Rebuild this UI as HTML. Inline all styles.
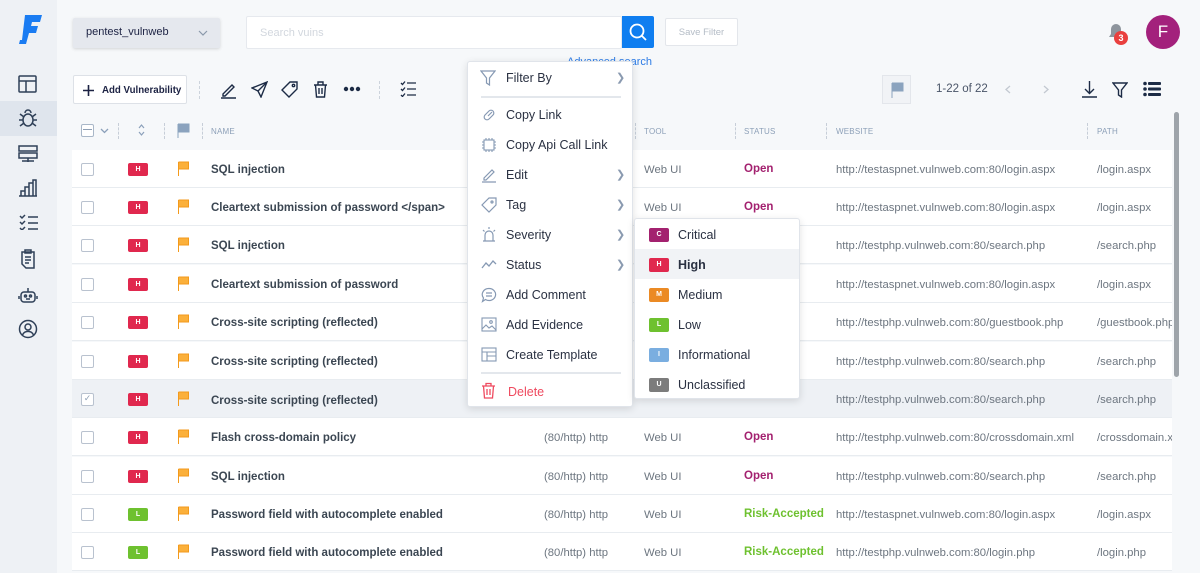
<!DOCTYPE html>
<html><head><meta charset="utf-8"><style>
*{box-sizing:border-box;margin:0;padding:0}
body{width:1200px;height:573px;overflow:hidden;background:#f6f8fa;font-family:"Liberation Sans",sans-serif;position:relative;color:#1c2243}
.a{position:absolute}
.side{left:0;top:0;width:57px;height:573px;background:#eef1f5}
.sel{left:0;top:101px;width:57px;height:35px;background:#dfe5ed}
.row{left:72px;width:1100px;height:38px;background:#fff;border-bottom:1px solid #e8ecf0}
.cb{width:13px;height:13px;border:1.5px solid #b9c2cf;border-radius:2px;background:#fff}
.bd{width:20px;height:13px;border-radius:2px;color:#fff;font-size:7px;font-weight:bold;text-align:center;line-height:13px}
.t{font-size:11.5px;white-space:nowrap}
.nm{font-weight:bold;color:#3b4652;font-size:11.5px;white-space:nowrap;margin-top:2px}
.g{color:#6d7680;font-size:11.3px;white-space:nowrap;margin-top:2px}
.hd{font-size:8px;color:#8da0b8;letter-spacing:.2px}
.menu{background:#fff;border:1px solid #e0e4ea;border-radius:3px;box-shadow:0 2px 8px rgba(0,0,0,.12)}
.mi{position:absolute;left:38px;font-size:12.5px;color:#2a3142}
.arr{position:absolute;left:148px;color:#8a9ab0;font-size:11px}
.sb{position:absolute;left:14px;width:20px;height:14px;border-radius:2px;color:#fff;font-size:7px;font-weight:bold;text-align:center;line-height:14px}
.sl{position:absolute;left:43px;font-size:12.5px;color:#2a3142}
</style></head><body>
<div class="a side"></div>
<div class="a sel"></div>
<svg class="a" style="left:18px;top:14px" width="24" height="32" viewBox="0 0 24 32"><path d="M7 1H24L22 8H14L13 12H20L18 19H11L8 30H1L2 26H4Z" fill="#1a7cf2"/></svg>
<svg class="a" style="left:18px;top:75px" width="20" height="18" fill="none" stroke="#2f4058" stroke-width="1.5"><rect x="1" y="1" width="17" height="16" rx="1"/><path d="M1 6H18M8 6V17"/></svg>
<svg class="a" style="left:18px;top:108px" width="20" height="20" fill="none" stroke="#2f4058" stroke-width="1.5"><ellipse cx="10" cy="12" rx="5" ry="6"/><path d="M7 5a3 3 0 0 1 6 0M1 12h4M15 12h4M2 6l4 3M18 6l-4 3M2 18l4-3M18 18l-4-3"/></svg>
<svg class="a" style="left:18px;top:145px" width="20" height="18" fill="none" stroke="#2f4058" stroke-width="1.5"><rect x="1" y="1" width="18" height="5"/><rect x="1" y="8" width="18" height="5"/><path d="M4 16h12M10 13v4"/></svg>
<svg class="a" style="left:18px;top:179px" width="20" height="18" fill="none" stroke="#2f4058" stroke-width="1.5"><path d="M1 17h18M3 17v-5h4v5M7 17V8h4v9M11 17V4h4v13M15 17V1h3v16"/></svg>
<svg class="a" style="left:19px;top:214px" width="20" height="16" fill="none" stroke="#2f4058" stroke-width="1.5"><path d="M1 2l2 2 3-3M1 8l2 2 3-3M1 14l2 2 3-3M9 3h10M9 9h10M9 15h10"/></svg>
<svg class="a" style="left:21px;top:249px" width="14" height="20" fill="none" stroke="#2f4058" stroke-width="1.5"><path d="M1 3h12v16H5l-4-4z M4 1h6v3H4z M4 8h6M4 11h6M4 14h4"/></svg>
<svg class="a" style="left:18px;top:286px" width="20" height="18" fill="none" stroke="#2f4058" stroke-width="1.5"><rect x="3" y="6" width="14" height="10" rx="3"/><path d="M10 6V2M1 10v3M19 10v3"/><circle cx="7.5" cy="10" r="1"/><circle cx="12.5" cy="10" r="1"/><path d="M8 13h4"/></svg>
<svg class="a" style="left:18px;top:319px" width="20" height="20" fill="none" stroke="#2f4058" stroke-width="1.5"><circle cx="10" cy="10" r="8.5"/><circle cx="10" cy="8" r="3"/><path d="M4.5 16a6 6 0 0 1 11 0"/></svg>

<div class="a" style="left:73px;top:18px;width:147px;height:30px;background:#e5e8ee;border-radius:2px;box-shadow:0 1px 3px rgba(0,0,0,.15)"><span class="a t" style="left:13px;top:8px;font-size:11px;color:#1c2243">pentest_vulnweb</span><svg class="a" style="left:125px;top:12px" width="10" height="6" fill="none" stroke="#8a98aa" stroke-width="1.2"><path d="M1 1l4 4 4-4"/></svg></div>
<div class="a" style="left:246px;top:16px;width:376px;height:33px;background:#fff;border:1px solid #e6e9ee;border-radius:2px"><span class="a" style="left:13px;top:10px;font-size:11px;color:#d2d7de">Search vuins</span></div>
<div class="a" style="left:622px;top:16px;width:32px;height:32px;background:#0f7ef0;border-radius:0 2px 2px 0"><svg width="32" height="32" fill="none" stroke="#fff" stroke-width="1.8"><circle cx="15" cy="15" r="6.5"/><path d="M20 20l4 4"/></svg></div>
<div class="a" style="left:665px;top:18px;width:73px;height:28px;background:#fff;border:1px solid #e3e6eb;border-radius:2px;font-size:9.5px;color:#b4bcc6;text-align:center;line-height:27px">Save Filter</div>
<div class="a" style="left:567px;top:56px;font-size:11px;color:#2c7be5">Advanced search</div>
<svg class="a" style="left:1108px;top:23px" width="16" height="18"><path d="M8 1a5 5 0 0 1 5 5v5l2 3H1l2-3V6a5 5 0 0 1 5-5z" fill="#8e959d"/></svg>
<div class="a" style="left:1114px;top:31px;width:14px;height:14px;border-radius:50%;background:#e9403e;color:#fff;font-size:9px;font-weight:bold;text-align:center;line-height:14px">3</div>
<div class="a" style="left:1146px;top:15px;width:34px;height:34px;border-radius:50%;background:#a3217c;color:#fff;font-size:17px;text-align:center;line-height:34px">F</div>

<div class="a" style="left:73px;top:75px;width:114px;height:29px;background:#fff;border:1px solid #dde1e7;border-radius:2px"><svg class="a" style="left:9px;top:9px" width="11" height="11" stroke="#1c2243" stroke-width="1.6"><path d="M5.5 0v11M0 5.5h11"/></svg><span class="a" style="left:28px;top:9px;font-size:9.7px;font-weight:bold;color:#1c2243;white-space:nowrap">Add Vulnerability</span></div>
<div class="a" style="left:199px;top:81px;height:18px;border-left:1px dashed #ccd3dc"></div>
<svg class="a" style="left:220px;top:81px" width="18" height="18" fill="none" stroke="#1c2b45" stroke-width="1.4"><path d="M3 13l9-9 2 2-9 9H3z M1 17h15"/></svg>
<svg class="a" style="left:251px;top:81px" width="17" height="17" fill="none" stroke="#1c2b45" stroke-width="1.4"><path d="M16 1L1 7l6 3 3 6z M16 1L7 10"/></svg>
<svg class="a" style="left:281px;top:81px" width="18" height="17" fill="none" stroke="#1c2b45" stroke-width="1.4"><path d="M9 1h7v7l-8 8-7-7z"/><circle cx="12.5" cy="4.5" r="1.2"/></svg>
<svg class="a" style="left:313px;top:81px" width="15" height="17" fill="none" stroke="#1c2b45" stroke-width="1.4"><path d="M1 4h13M5 4V1h5v3M2.5 4l1 12h8l1-12M6 7v6M9 7v6"/></svg>
<svg class="a" style="left:343px;top:86px" width="18" height="6" fill="#1c2b45"><circle cx="3" cy="3" r="2.2"/><circle cx="9" cy="3" r="2.2"/><circle cx="15" cy="3" r="2.2"/></svg>
<div class="a" style="left:379px;top:81px;height:18px;border-left:1px dashed #ccd3dc"></div>
<svg class="a" style="left:400px;top:81px" width="17" height="16" fill="none" stroke="#1c2b45" stroke-width="1.3"><path d="M1 2l1.5 1.5 2.5-3M1 8l1.5 1.5 2.5-3M1 14l1.5 1.5 2.5-3M7 2h9M7 8h9M7 14h9"/></svg>
<div class="a" style="left:882px;top:75px;width:29px;height:29px;background:#f1f3f6;border:1px solid #e3e6eb"><svg width="29" height="29"><path d="M9 7v15M9 7h11v8H9" fill="#8ba3be" stroke="#8ba3be"/></svg></div>
<div class="a" style="left:936px;top:83px;font-size:11.5px;color:#4a5568">1-22 of 22</div>
<svg class="a" style="left:1005px;top:85px" width="6" height="9" fill="none" stroke="#c3c9d1" stroke-width="1.3"><path d="M5 1L1 4.5 5 8"/></svg>
<svg class="a" style="left:1043px;top:85px" width="6" height="9" fill="none" stroke="#c3c9d1" stroke-width="1.3"><path d="M1 1l4 3.5L1 8"/></svg>
<svg class="a" style="left:1081px;top:80px" width="17" height="18" fill="none" stroke="#1c2b45" stroke-width="1.4"><path d="M8.5 1v12M4 9l4.5 4.5L13 9M1 17h15"/></svg>
<svg class="a" style="left:1112px;top:82px" width="16" height="16" fill="none" stroke="#1c2b45" stroke-width="1.4"><path d="M1 1h14l-5.5 7v7l-3-2V8z"/></svg>
<svg class="a" style="left:1143px;top:81px" width="18" height="16" fill="#1c2b45"><circle cx="2" cy="2.5" r="1.8"/><circle cx="2" cy="8" r="1.8"/><circle cx="2" cy="13.5" r="1.8"/><rect x="5" y="1" width="13" height="3" rx="1"/><rect x="5" y="6.5" width="13" height="3" rx="1"/><rect x="5" y="12" width="13" height="3" rx="1"/></svg>

<div class="a cb" style="left:81px;top:124px;border-color:#a9b7c8"><div style="margin:4px 1px;border-top:1.5px solid #8fa0b5"></div></div>
<svg class="a" style="left:100px;top:128px" width="9" height="6" fill="none" stroke="#8ba0ba" stroke-width="1.3"><path d="M1 1l3.5 3.5L8 1"/></svg>
<div class="a" style="left:118px;top:123px;height:16px;border-left:1px dashed #c7ced8"></div>
<svg class="a" style="left:138px;top:124px" width="7" height="12" fill="none" stroke="#8ba0ba" stroke-width="1.2"><path d="M1 4l2.5-3L6 4M1 8l2.5 3L6 8"/></svg>
<div class="a" style="left:164px;top:123px;height:16px;border-left:1px dashed #c7ced8"></div>
<svg class="a" style="left:176px;top:123px" width="14" height="15"><path d="M2 1v14M2 1h11v8H2" fill="#8ba3be" stroke="#8ba3be"/></svg>
<div class="a" style="left:202px;top:123px;height:16px;border-left:1px dashed #c7ced8"></div>
<div class="a hd" style="left:211px;top:127px">NAME</div>
<div class="a" style="left:635px;top:123px;height:16px;border-left:1px dashed #c7ced8"></div>
<div class="a hd" style="left:644px;top:127px">TOOL</div>
<div class="a" style="left:735px;top:123px;height:16px;border-left:1px dashed #c7ced8"></div>
<div class="a hd" style="left:744px;top:127px">STATUS</div>
<div class="a" style="left:826px;top:123px;height:16px;border-left:1px dashed #c7ced8"></div>
<div class="a hd" style="left:836px;top:127px">WEBSITE</div>
<div class="a" style="left:1087px;top:123px;height:16px;border-left:1px dashed #c7ced8"></div>
<div class="a hd" style="left:1097px;top:127px">PATH</div>

<div class="a row" style="top:150px"></div><div class="a row" style="top:188px"></div><div class="a row" style="top:226px"></div><div class="a row" style="top:265px"></div><div class="a row" style="top:303px"></div><div class="a row" style="top:342px"></div><div class="a row" style="top:380px;background:#eef1f5"></div><div class="a row" style="top:418px"></div><div class="a row" style="top:457px"></div><div class="a row" style="top:495px"></div><div class="a row" style="top:533px"></div>

<div class="a cb" style="left:81px;top:163px"></div><div class="a bd" style="left:128px;top:163px;background:#e0284e">H</div>
<div class="a cb" style="left:81px;top:201px"></div><div class="a bd" style="left:128px;top:201px;background:#e0284e">H</div>
<div class="a cb" style="left:81px;top:239px"></div><div class="a bd" style="left:128px;top:239px;background:#e0284e">H</div>
<div class="a cb" style="left:81px;top:278px"></div><div class="a bd" style="left:128px;top:278px;background:#e0284e">H</div>
<div class="a cb" style="left:81px;top:316px"></div><div class="a bd" style="left:128px;top:316px;background:#e0284e">H</div>
<div class="a cb" style="left:81px;top:355px"></div><div class="a bd" style="left:128px;top:355px;background:#e0284e">H</div>
<div class="a cb" style="left:81px;top:393px;font-size:9px;color:#8fa0b5;line-height:9px;text-align:center">&#10003;</div><div class="a bd" style="left:128px;top:393px;background:#e0284e">H</div>
<div class="a cb" style="left:81px;top:431px"></div><div class="a bd" style="left:128px;top:431px;background:#e0284e">H</div>
<div class="a cb" style="left:81px;top:470px"></div><div class="a bd" style="left:128px;top:470px;background:#e0284e">H</div>
<div class="a cb" style="left:81px;top:508px"></div><div class="a bd" style="left:128px;top:508px;background:#6ec12f">L</div>
<div class="a cb" style="left:81px;top:546px"></div><div class="a bd" style="left:128px;top:546px;background:#6ec12f">L</div>

<svg class="a" style="left:177px;top:0" width="14" height="573" fill="#fbb03b" stroke="#f39a1c" stroke-width="1"><g id="f"><path d="M1.5 162v14M1.5 162h10v7h-10"/></g><use href="#f" y="38"/><use href="#f" y="76"/><use href="#f" y="115"/><use href="#f" y="153"/><use href="#f" y="192"/><use href="#f" y="230"/><use href="#f" y="268"/><use href="#f" y="307"/><use href="#f" y="345"/><use href="#f" y="383"/></svg>

<div class="a nm" style="left:211px;top:162px">SQL injection</div>
<div class="a nm" style="left:211px;top:200px">Cleartext submission of password &lt;/span&gt;</div>
<div class="a nm" style="left:211px;top:238px">SQL injection</div>
<div class="a nm" style="left:211px;top:277px">Cleartext submission of password</div>
<div class="a nm" style="left:211px;top:315px">Cross-site scripting (reflected)</div>
<div class="a nm" style="left:211px;top:354px">Cross-site scripting (reflected)</div>
<div class="a nm" style="left:211px;top:393px">Cross-site scripting (reflected)</div>
<div class="a nm" style="left:211px;top:430px">Flash cross-domain policy</div>
<div class="a nm" style="left:211px;top:469px">SQL injection</div>
<div class="a nm" style="left:211px;top:507px">Password field with autocomplete enabled</div>
<div class="a nm" style="left:211px;top:545px">Password field with autocomplete enabled</div>

<div class="a g" style="left:544px;top:430px">(80/http) http</div>
<div class="a g" style="left:544px;top:469px">(80/http) http</div>
<div class="a g" style="left:544px;top:507px">(80/http) http</div>
<div class="a g" style="left:544px;top:545px">(80/http) http</div>

<div class="a g" style="left:644px;top:162px">Web UI</div><div class="a t" style="left:744px;top:163px;color:#a3216f;font-weight:bold">Open</div>
<div class="a g" style="left:644px;top:200px">Web UI</div><div class="a t" style="left:744px;top:201px;color:#a3216f;font-weight:bold">Open</div>
<div class="a g" style="left:644px;top:430px">Web UI</div><div class="a t" style="left:744px;top:431px;color:#a3216f;font-weight:bold">Open</div>
<div class="a g" style="left:644px;top:469px">Web UI</div><div class="a t" style="left:744px;top:470px;color:#a3216f;font-weight:bold">Open</div>
<div class="a g" style="left:644px;top:507px">Web UI</div><div class="a t" style="left:744px;top:508px;color:#6ec12f;font-weight:bold">Risk-Accepted</div>
<div class="a g" style="left:644px;top:545px">Web UI</div><div class="a t" style="left:744px;top:546px;color:#6ec12f;font-weight:bold">Risk-Accepted</div>

<div class="a g" style="left:836px;top:162px">http://testaspnet.vulnweb.com:80/login.aspx</div><div class="a g" style="left:1097px;top:162px">/login.aspx</div>
<div class="a g" style="left:836px;top:200px">http://testaspnet.vulnweb.com:80/login.aspx</div><div class="a g" style="left:1097px;top:200px">/login.aspx</div>
<div class="a g" style="left:836px;top:238px">http://testphp.vulnweb.com:80/search.php</div><div class="a g" style="left:1097px;top:238px">/search.php</div>
<div class="a g" style="left:836px;top:277px">http://testaspnet.vulnweb.com:80/login.aspx</div><div class="a g" style="left:1097px;top:277px">/login.aspx</div>
<div class="a g" style="left:836px;top:315px">http://testphp.vulnweb.com:80/guestbook.php</div><div class="a g" style="left:1097px;top:315px">/guestbook.php</div>
<div class="a g" style="left:836px;top:354px">http://testphp.vulnweb.com:80/search.php</div><div class="a g" style="left:1097px;top:354px">/search.php</div>
<div class="a g" style="left:836px;top:392px">http://testphp.vulnweb.com:80/search.php</div><div class="a g" style="left:1097px;top:392px">/search.php</div>
<div class="a g" style="left:836px;top:430px">http://testphp.vulnweb.com:80/crossdomain.xml</div><div class="a g" style="left:1097px;top:430px">/crossdomain.xml</div>
<div class="a g" style="left:836px;top:469px">http://testphp.vulnweb.com:80/search.php</div><div class="a g" style="left:1097px;top:469px">/search.php</div>
<div class="a g" style="left:836px;top:507px">http://testaspnet.vulnweb.com:80/login.aspx</div><div class="a g" style="left:1097px;top:507px">/login.aspx</div>
<div class="a g" style="left:836px;top:545px">http://testphp.vulnweb.com:80/login.php</div><div class="a g" style="left:1097px;top:545px">/login.php</div>

<div class="a" style="left:1172px;top:150px;width:28px;height:423px;background:#f6f8fa"></div>
<div class="a" style="left:1174px;top:112px;width:5px;height:265px;background:#9ea4aa;border-radius:3px"></div>

<div class="a menu" style="left:467px;top:61px;width:166px;height:346px">
<svg class="a" style="left:12px;top:8px" width="16" height="16" fill="none" stroke="#8699b3" stroke-width="1.2"><path d="M1 1h14l-5.5 7v7l-3-2V8z"/></svg>
<div class="mi" style="top:9px">Filter By</div><div class="arr" style="top:9px">&#10095;</div>
<div class="a" style="left:13px;top:34px;width:140px;border-top:2px solid #e3e7ec"></div>
<svg class="a" style="left:13px;top:45px" width="16" height="16" fill="none" stroke="#8699b3" stroke-width="1.2"><path d="M7 9l4-4M6 6l2-2a2.8 2.8 0 0 1 4 4l-2 2M10 10l-2 2a2.8 2.8 0 0 1-4-4l2-2"/></svg>
<div class="mi" style="top:46px">Copy Link</div>
<svg class="a" style="left:13px;top:75px" width="16" height="16" fill="none" stroke="#8699b3" stroke-width="1.1"><rect x="3" y="3" width="10" height="10"/><path d="M5 1v2M8 1v2M11 1v2M5 13v2M8 13v2M11 13v2M1 5h2M1 8h2M1 11h2M13 5h2M13 8h2M13 11h2"/></svg>
<div class="mi" style="top:76px">Copy Api Call Link</div>
<svg class="a" style="left:13px;top:105px" width="16" height="16" fill="none" stroke="#8699b3" stroke-width="1.2"><path d="M3 11l8-8 2 2-8 8H3z M1 15h14"/></svg>
<div class="mi" style="top:106px">Edit</div><div class="arr" style="top:106px">&#10095;</div>
<svg class="a" style="left:13px;top:135px" width="16" height="16" fill="none" stroke="#8699b3" stroke-width="1.2"><path d="M8 1h7v7l-7 7-7-7z"/><circle cx="11" cy="5" r="1"/></svg>
<div class="mi" style="top:136px">Tag</div><div class="arr" style="top:136px">&#10095;</div>
<svg class="a" style="left:13px;top:164px" width="16" height="17" fill="none" stroke="#8699b3" stroke-width="1.2"><path d="M4 15V9a4 4 0 0 1 8 0v6M2 15h12M8 1v2M2 4l1.5 1.5M14 4l-1.5 1.5"/></svg>
<div class="mi" style="top:166px">Severity</div><div class="arr" style="top:166px">&#10095;</div>
<svg class="a" style="left:13px;top:196px" width="16" height="12" fill="none" stroke="#8699b3" stroke-width="1.3"><path d="M1 10l4-5 3 3 4-5 3 3"/></svg>
<div class="mi" style="top:196px">Status</div><div class="arr" style="top:196px">&#10095;</div>
<svg class="a" style="left:13px;top:225px" width="16" height="16" fill="none" stroke="#8699b3" stroke-width="1.2"><path d="M8 1.5a6.5 6 0 1 1-3.5 11L1.5 14.5l1-3.5A6.5 6 0 0 1 8 1.5zM5 6h6M5 9h6"/></svg>
<div class="mi" style="top:226px">Add Comment</div>
<svg class="a" style="left:13px;top:255px" width="16" height="15" fill="none" stroke="#8699b3" stroke-width="1.1"><rect x="1" y="1" width="14" height="13"/><path d="M1 12l4-4 3 3 3-2 4 4"/><circle cx="10" cy="5" r="1.3"/></svg>
<div class="mi" style="top:256px">Add Evidence</div>
<svg class="a" style="left:13px;top:285px" width="16" height="15" fill="none" stroke="#8699b3" stroke-width="1.1"><rect x="1" y="1" width="14" height="13"/><path d="M1 5h14M6 5v9M6 9h9"/></svg>
<div class="mi" style="top:286px">Create Template</div>
<div class="a" style="left:13px;top:310px;width:140px;border-top:2px solid #e3e7ec"></div>
<svg class="a" style="left:13px;top:320px" width="15" height="17" fill="none" stroke="#ef4a5f" stroke-width="1.3"><path d="M1 4h13M5 4V1.5h5V4M2.5 4l1 12h8l1-12M6 7v6M9 7v6"/></svg>
<div class="mi" style="top:323px;left:40px;color:#ef4a5f">Delete</div>
</div>

<div class="a menu" style="left:634px;top:218px;width:166px;height:181px">
<div class="sb" style="top:9px;background:#a3216f">C</div><div class="sl" style="top:9px">Critical</div>
<div class="a" style="left:0;top:30px;width:164px;height:30px;background:#f1f3f6"></div>
<div class="sb" style="top:39px;background:#e0284e">H</div><div class="sl" style="top:39px;font-weight:bold">High</div>
<div class="sb" style="top:69px;background:#eb8a24">M</div><div class="sl" style="top:69px">Medium</div>
<div class="sb" style="top:99px;background:#6ec12f">L</div><div class="sl" style="top:99px">Low</div>
<div class="sb" style="top:129px;background:#7aaee0">I</div><div class="sl" style="top:129px">Informational</div>
<div class="sb" style="top:159px;background:#7c7c7c">U</div><div class="sl" style="top:159px">Unclassified</div>
</div>
</body></html>
